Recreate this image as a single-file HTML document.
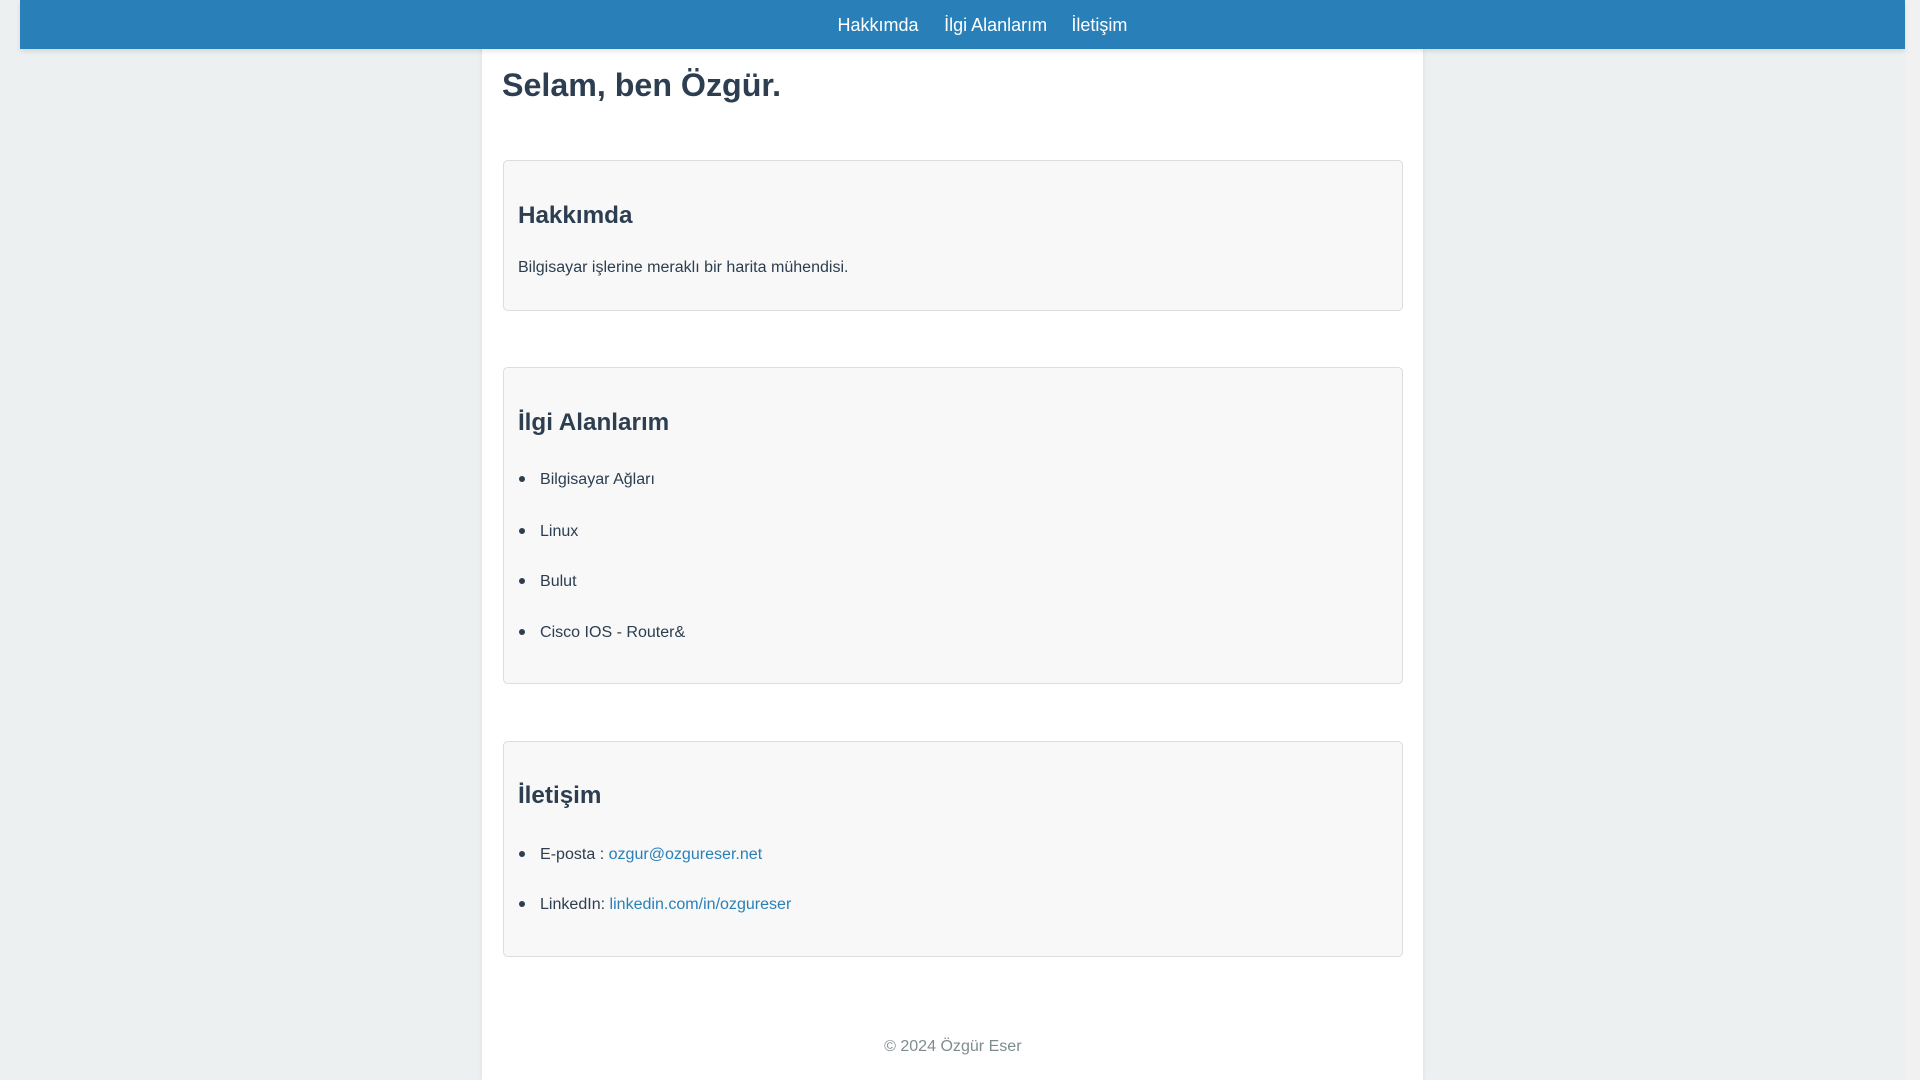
<!DOCTYPE html>
<html><head><meta charset="utf-8"><style>
html{zoom:1.22449}
html,body{margin:0;padding:0;width:1568px;height:882px;overflow:hidden;background:#ecf0f1;font-family:"Liberation Sans",Arial,sans-serif;color:#2c3e50}
.a{position:absolute;white-space:nowrap}
#hdr{position:absolute;left:16px;top:0;width:1540px;height:40px;background:#2980b9;box-shadow:0 2px 4px rgba(0,0,0,.1);z-index:2}
#hdr span{position:absolute;top:12px;color:#fff;font-size:14.7px}
#main{position:absolute;left:394px;top:0;width:768px;height:882px;background:#fff;box-shadow:0 0 4px rgba(0,0,0,.08)}
.card{position:absolute;left:411px;width:733px;background:#f8f8f8;border:1px solid #ddd;border-radius:4px}
.h1{font-size:26.3px;font-weight:bold}
.h2{font-size:19.8px;font-weight:bold}
.t{font-size:13.1px}
.li::before{content:"";position:absolute;left:-17px;top:5px;width:5px;height:5px;border-radius:50%;background:#2c3e50}
a{color:#2980b9;text-decoration:none}
#sb{position:absolute;left:1556px;top:0;width:12px;height:882px;background:#f1f1f1}
#th{position:absolute;left:1558px;top:16px;width:8px;height:836px;background:#c1c1c1}
</style></head><body>
<div id="main"></div>
<div id="hdr"><span style="left:668px">Hakkımda</span><span style="left:755px">İlgi Alanlarım</span><span style="left:859px">İletişim</span></div>
<div class="a h1" style="left:410px;top:55px">Selam, ben Özgür.</div>
<div class="card" style="top:131px;height:121px"></div>
<div class="a h2" style="left:423px;top:165px">Hakkımda</div>
<div class="a t" style="left:423px;top:211px">Bilgisayar işlerine meraklı bir harita mühendisi.</div>
<div class="card" style="top:300px;height:257px"></div>
<div class="a h2" style="left:423px;top:334px">İlgi Alanlarım</div>
<div class="a t li" style="left:441px;top:384px">Bilgisayar Ağları</div>
<div class="a t li" style="left:441px;top:426px">Linux</div>
<div class="a t li" style="left:441px;top:467px">Bulut</div>
<div class="a t li" style="left:441px;top:509px">Cisco IOS - Router&amp;</div>
<div class="card" style="top:605px;height:175px"></div>
<div class="a h2" style="left:423px;top:639px">İletişim</div>
<div class="a t li" style="left:441px;top:690px">E-posta : <a>ozgur@ozgureser.net</a></div>
<div class="a t li" style="left:441px;top:731px">LinkedIn: <a>linkedin.com/in/ozgureser</a></div>
<div class="a t" style="left:722px;top:847px;color:#7f8c8d">© 2024 Özgür Eser</div>
<div id="sb"><div id="th"></div></div>
</body></html>
